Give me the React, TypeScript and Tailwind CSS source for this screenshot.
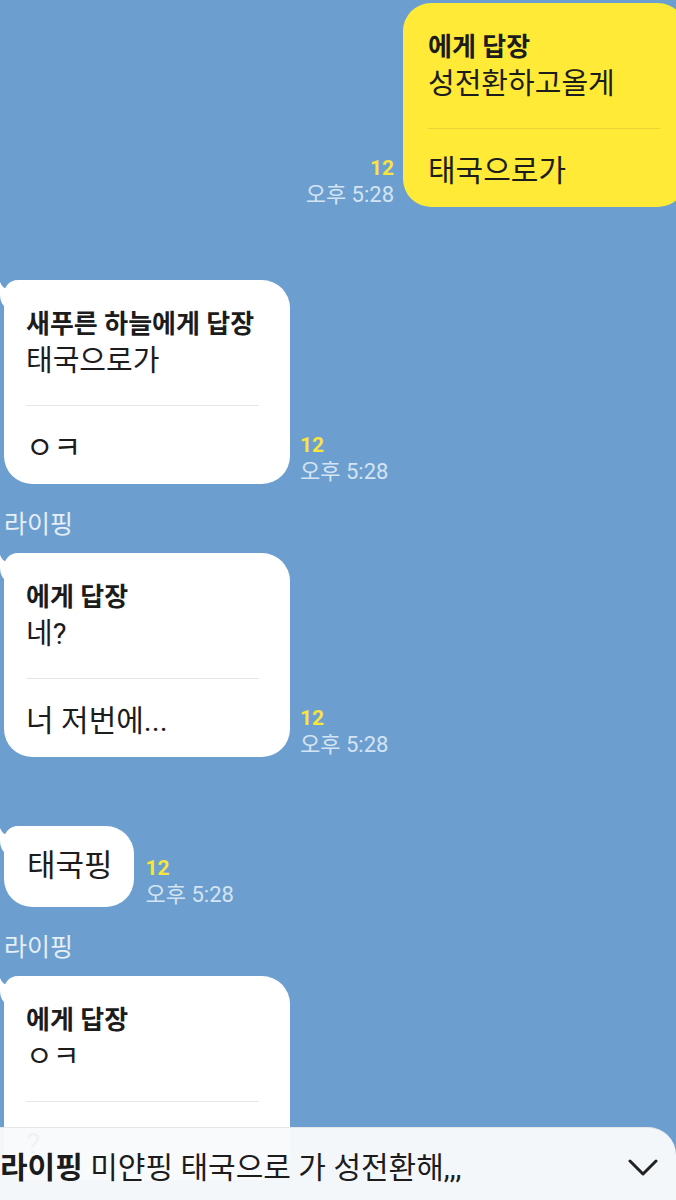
import React from 'react';

function Tail() {
  return (
    <svg
      className="absolute left-[-4px] top-0 w-[16px] h-[26px]"
      viewBox="0 0 16 26"
      aria-hidden="true"
    >
      <path d="M0 2 Q6 16 16 0 L16 26 L4 26 Q0 22 0 14 Z" fill="#ffffff" />
    </svg>
  );
}

interface MetaProps {
  align?: 'left' | 'right';
}

function Meta({ align = 'left' }: MetaProps) {
  return (
    <div className={`flex flex-col shrink-0 ${align === 'right' ? 'items-end' : 'items-start'}`}>
      <span className="text-[21px] leading-[24px] font-bold text-[#f9e43c]">12</span>
      <span className="text-[22px] leading-[24px] mt-[3px] text-[#d5e4f2]">오후 5:28</span>
    </div>
  );
}

interface ReplyProps {
  title: string;
  quote: string;
  text: string;
}

function ReplyBubble({ title, quote, text }: ReplyProps) {
  return (
    <div className="relative w-[286px] shrink-0 rounded-[28px] rounded-tl-[14px] bg-white pl-[22px] pr-[31px] pt-[28px] pb-[16px] text-[#1c1c1c]">
      <Tail />
      <div className="text-[26px] leading-[32px] font-bold whitespace-nowrap">{title}</div>
      <div className="text-[29px] leading-[36px] mt-[3px]">{quote}</div>
      <div className="h-px bg-[#e6e6e6] mt-[26px]" />
      <div className="text-[30px] leading-[40px] mt-[22px]">{text}</div>
    </div>
  );
}

function Name() {
  return (
    <div className="pl-[4px] mt-[26px] mb-[13px] text-[25px] leading-[30px] text-[#e6eef7]">라이핑</div>
  );
}

export default function App() {
  return (
    <div className="relative w-[676px] h-[1200px] overflow-hidden bg-[#6c9fcf] font-[Roboto,'Noto_Sans_CJK_KR',sans-serif]">
      <div className="flex flex-col pt-[3px]">
        {/* my reply */}
        <div className="flex items-end justify-end gap-[9px]">
          <Meta align="right" />
          <div className="w-[283px] shrink-0 mr-[-10px] rounded-[28px] bg-[#feea37] pl-[25px] pr-[26px] pt-[28px] pb-[16px] text-[#1c1c1c]">
            <div className="text-[26px] leading-[32px] font-bold">에게 답장</div>
            <div className="text-[29px] leading-[36px] mt-[3px]">성전환하고올게</div>
            <div className="h-px bg-[#e8d434] mt-[26px]" />
            <div className="text-[30px] leading-[40px] mt-[22px]">태국으로가</div>
          </div>
        </div>

        <div className="flex items-end gap-[10px] pl-[4px] mt-[73px]">
          <ReplyBubble title="새푸른 하늘에게 답장" quote="태국으로가" text="ㅇㅋ" />
          <Meta />
        </div>

        <Name />
        <div className="flex items-end gap-[10px] pl-[4px]">
          <ReplyBubble title="에게 답장" quote="네?" text="너 저번에..." />
          <Meta />
        </div>

        <div className="flex items-end gap-[12px] pl-[4px] mt-[69px]">
          <div className="relative shrink-0 rounded-[28px] rounded-tl-[14px] bg-white pl-[23px] pr-[21px] pt-[20px] pb-[21px] text-[31px] leading-[40px] text-[#1c1c1c]">
            <Tail />
            태국핑
          </div>
          <Meta />
        </div>

        <Name />
        <div className="flex items-end pl-[4px]">
          <ReplyBubble title="에게 답장" quote="ㅇㅋ" text="?" />
        </div>
      </div>

      {/* notice bar */}
      <div className="absolute left-0 right-0 top-[1127px] h-[80px] border-t border-[#e4e6e9] rounded-tr-[28px] bg-[#f9fafb]/[0.97] flex items-start justify-between pt-[22px] pr-[18px]">
        <div className="text-[30px] leading-[36px] text-[#1c1c1c] whitespace-nowrap">
          <span className="font-bold">라이핑</span> 미얀핑 태국으로 가 성전환해,,,
        </div>
        <svg className="w-[30px] h-[18px] mt-[9px]" viewBox="0 0 30 18" fill="none" aria-hidden="true">
          <path d="M2 2 L15 15 L28 2" stroke="#222222" strokeWidth="3" strokeLinecap="round" strokeLinejoin="round" />
        </svg>
      </div>
    </div>
  );
}
